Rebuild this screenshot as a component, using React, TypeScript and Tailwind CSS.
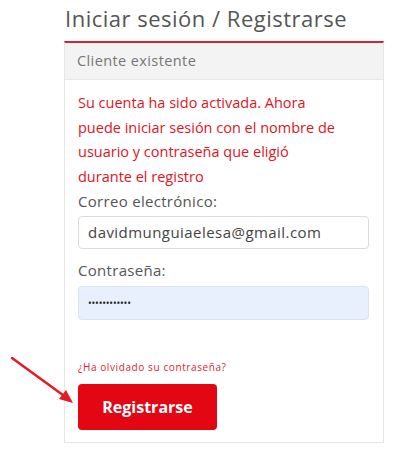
import React from "react";

export default function App() {
  return (
    <div className="relative w-[407px] h-[456px] bg-white overflow-hidden" style={{ fontFamily: "'Open Sans', 'Liberation Sans', sans-serif" }}>
      <h1 className="pl-[65px] pt-[4px] text-[22px] leading-[29px] tracking-[0.5px] text-[#555] font-normal">Iniciar sesión / Registrarse</h1>
      <div className="ml-[64px] mt-[8px] w-[320px] border border-[#e6e6e6] border-t-[#d9232e] border-t-2">
        <div className="h-[37px] bg-[#f3f3f3] border-b border-[#e8e8e8] pl-[12px] flex items-center text-[14.5px] tracking-[0.4px] text-[#777]">Cliente existente</div>
        <div className="px-[13px] pt-[11px] pb-[12px]">
          <p className="text-[14.5px] leading-[24.5px] text-[#e0141e]">
            Su cuenta ha sido activada. Ahora<br />puede iniciar sesión con el nombre de<br />usuario y contraseña que eligió<br />durante el registro
          </p>
          <label className="block text-[15px] leading-[24px] tracking-[0.3px] text-[#555]">Correo electrónico:</label>
          <div className="mt-[3px] h-[33px] w-[291px] rounded-[4px] border border-[#dcdcdc] bg-white flex items-center pl-[9px] text-[15px] tracking-[0.45px] text-[#444]">davidmunguiaelesa@gmail.com</div>
          <label className="block mt-[9px] text-[15px] leading-[24px] tracking-[0.3px] text-[#555]">Contraseña:</label>
          <div className="mt-[4px] h-[34px] w-[291px] rounded-[4px] border border-[#dde3ee] bg-[#e8f0fe] flex items-center pl-[9px] text-[10px] tracking-[-0.2px] text-[#222]">••••••••••••</div>
          <a className="block mt-[40px] text-[10px] leading-[14px] tracking-[0.6px] text-[#d9232e]">¿Ha olvidado su contraseña?</a>
          <button className="mt-[10px] h-[46px] w-[139px] rounded-[4px] bg-[#e30613] text-white text-[16px] font-bold">Registrarse</button>
        </div>
      </div>
      <svg className="absolute left-0 top-0" width="407" height="456" viewBox="0 0 407 456">
        <line x1="12" y1="358" x2="67" y2="398" stroke="#e31b23" strokeWidth="2.5" strokeLinecap="round" />
        <polygon points="73,403 59,399 66,390" fill="#e31b23" />
      </svg>
    </div>
  );
}
